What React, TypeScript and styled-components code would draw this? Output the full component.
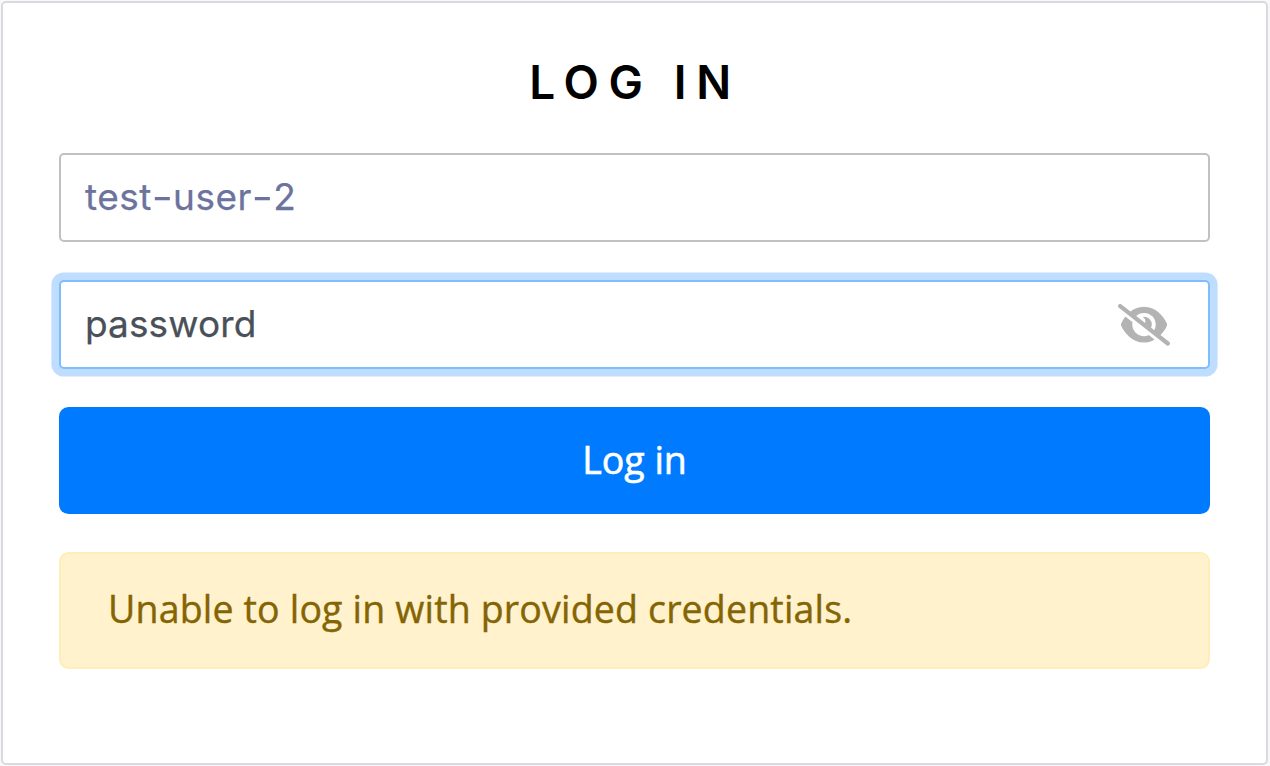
import React from "react";
import styled, { createGlobalStyle } from "styled-components";

const GlobalStyle = createGlobalStyle`
  *, *::before, *::after { box-sizing: border-box; }
  body {
    margin: 0;
    background: #f8f8f9;
    font-family: "Open Sans", "Noto Sans", sans-serif;
    font-weight: 500;
    overflow: hidden;
  }
`;

const Page = styled.main`
  height: 766px;
  padding: 1px 2px 1px 1px;
`;

const Card = styled.section`
  height: 764px;
  padding: 55px 56px 0;
  background: #fff;
  border: 2px solid #d9d9df;
  border-radius: 5px;
`;

const Title = styled.h1`
  margin: 0;
  height: 46px;
  line-height: 48px;
  padding-left: 1px;
  text-align: center;
  font-family: Inter, sans-serif;
  font-size: 46px;
  font-weight: 600;
  letter-spacing: 9.6px;
  color: #000;
`;

const Form = styled.div`
  display: flex;
  flex-direction: column;
  gap: 38px;
  margin-top: 49px;
`;

const Field = styled.div<{ $focused?: boolean }>`
  display: flex;
  align-items: center;
  justify-content: space-between;
  height: 89px;
  padding: 0 38px 0 24px;
  background: #fff;
  border: 2px solid ${(p) => (p.$focused ? "#80bdff" : "#c1c1c1")};
  border-radius: 5px;
  box-shadow: ${(p) => (p.$focused ? "0 0 0 7.6px rgba(0, 123, 255, 0.25)" : "none")};
`;

const Value = styled.span<{ $color: string; $spacing: number }>`
  font-family: Inter, sans-serif;
  font-size: 37px;
  font-weight: 400;
  line-height: 56px;
  padding-bottom: 1px;
  letter-spacing: ${(p) => p.$spacing}px;
  -webkit-text-stroke: 0.25px currentColor;
  color: ${(p) => p.$color};
`;

const Hyphen = styled.span`
  display: inline-block;
  margin: 0 1.8px;
  transform: scaleX(1.25);
`;

const ToggleIcon = styled.svg`
  width: 52px;
  height: 42px;
  color: #b3b3b3;
`;

const Button = styled.button`
  height: 107px;
  padding: 0 0 2px;
  border: 0;
  border-radius: 9.5px;
  background: #007bff;
  color: #fff;
  font: 500 37.5px/56px "Open Sans", sans-serif;
  -webkit-text-stroke: 0.6px currentColor;
`;

const Alert = styled.div`
  height: 117px;
  padding: 27px 47px;
  border: 2px solid #ffeeba;
  border-radius: 9.5px;
  background: #fff2cd;
  color: #856404;
  font-size: 37.5px;
  line-height: 56px;
  letter-spacing: 0.17px;
  -webkit-text-stroke: 0.4px currentColor;
  white-space: nowrap;
`;

function EyeSlash() {
  return (
    <ToggleIcon viewBox="0 0 52 42" fill="currentColor" aria-hidden="true">
      <mask id="eye" maskUnits="userSpaceOnUse" x="0" y="0" width="52" height="42">
        <rect width="52" height="42" fill="#fff" />
        <circle cx="26" cy="20.6" r="11.7" fill="#000" />
        <circle cx="26" cy="20.6" r="7.8" fill="#fff" />
        <circle cx="22.8" cy="17.2" r="4.6" fill="#000" />
        <path d="M-5 0.2 L47.7 41.8" stroke="#000" strokeWidth="4" />
        <path d="M17 19 L28 27.7 L27 30 L17 26Z" fill="#000" />
      </mask>
      <path
        mask="url(#eye)"
        d="M3.2 19.5 C6.5 12 14.5 2.7 26 2.7 S45.6 12 48.9 19.5 Q49.4 20.6 48.9 21.7 C45.6 29.2 37.5 38.5 26 38.5 S6.5 29.2 3.2 21.7 Q2.7 20.6 3.2 19.5Z"
      />
      <path d="M2.2 2.1 L49.8 39.5" stroke="currentColor" strokeWidth="4.2" strokeLinecap="round" />
    </ToggleIcon>
  );
}

export default function App() {
  return (
    <Page>
      <GlobalStyle />
      <Card>
        <Title>LOG IN</Title>
        <Form>
          <Field>
            <Value $color="#6c739c" $spacing={0.5}>
              test<Hyphen>-</Hyphen>user<Hyphen>-</Hyphen>2
            </Value>
          </Field>
          <Field $focused>
            <Value $color="#495057" $spacing={0.1}>password</Value>
            <EyeSlash />
          </Field>
          <Button type="button">Log in</Button>
          <Alert role="alert">Unable to log in with provided credentials.</Alert>
        </Form>
      </Card>
    </Page>
  );
}
